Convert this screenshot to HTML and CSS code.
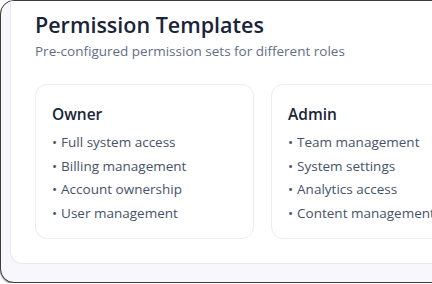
FILE: index.html
```html
<!DOCTYPE html>
<html lang="en">
<head>
  <meta charset="UTF-8" />
  <meta name="viewport" content="width=device-width, initial-scale=1.0" />
  <title>Permission Templates</title>
  <link rel="stylesheet" href="styles.css">
</head>
<body>
  <div class="frame">
    <section class="panel">
      <h2>Permission Templates</h2>
      <p class="subtitle">Pre-configured permission sets for different roles</p>

      <div class="templates">
        <div class="template">
          <h3>Owner</h3>
          <ul>
            <li>Full system access</li>
            <li>Billing management</li>
            <li>Account ownership</li>
            <li>User management</li>
          </ul>
        </div>
        <div class="template">
          <h3>Admin</h3>
          <ul>
            <li>Team management</li>
            <li>System settings</li>
            <li>Analytics access</li>
            <li>Content management</li>
          </ul>
        </div>
      </div>
    </section>
  </div>
</body>
</html>
```

FILE: styles.css
```css
body {
  margin: 0;
  background: #fff;
  font-family: "Open Sans", "Noto Sans", sans-serif;
  overflow: hidden;
}
.frame {
  width: 560px;
  height: 264px;
  background: #f8f8fc;
  border: 1px solid #3c3c3c;
  border-radius: 14px;
  box-shadow: 0 1px 1px rgba(0, 0, 0, 0.45);
  padding: 0 0 17px 9px;
  overflow: hidden;
}
.panel {
  background: #fff;
  border: 1px solid #e8e8ee;
  border-top: none;
  border-radius: 0 0 12px 12px;
  padding: 8px 24px 0;
  height: 263px;
  box-sizing: border-box;
}
h2 {
  margin: 0;
  font-size: 21.5px;
  font-weight: 600;
  line-height: 32px;
  color: #1a2438;
}
.subtitle {
  margin: 0;
  font-size: 13.5px;
  line-height: 20px;
  color: #5f6f86;
}
.templates {
  display: grid;
  grid-template-columns: 219px 219px;
  gap: 17px;
  margin-top: 23px;
}
.template {
  border: 1px solid #ececf1;
  border-radius: 12px;
  padding: 16px 16px 10px;
  height: 155px;
  box-sizing: border-box;
}
h3 {
  margin: 0;
  font-size: 15.5px;
  font-weight: 600;
  line-height: 26px;
  color: #1a2438;
}
ul {
  list-style: none;
  margin: 4px 0 0;
  padding: 0;
}
li {
  font-size: 13.5px;
  line-height: 23.7px;
  color: #44536a;
  white-space: nowrap;
}
li::before {
  content: "•";
  margin: 0 4px 0 0;
}
```
